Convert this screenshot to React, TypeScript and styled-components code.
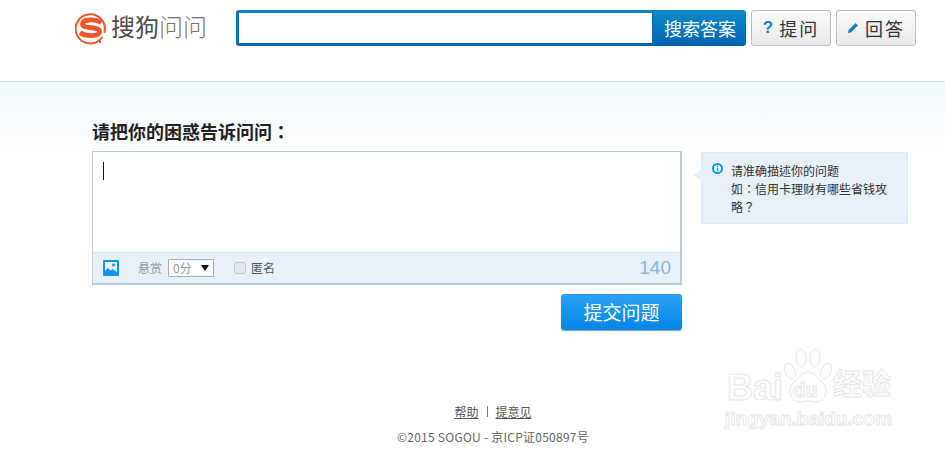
import styled, { createGlobalStyle } from "styled-components";

const GlobalStyle = createGlobalStyle`
  html, body {
    margin: 0;
    padding: 0;
    background: #fff;
    overflow: hidden;
  }
  body {
    font-family: "Liberation Sans", "Noto Sans CJK SC", sans-serif;
    color: #333;
  }
`;

const Page = styled.div`
  position: relative;
  width: 945px;
  height: 451px;
  overflow: hidden;
`;

const Header = styled.header`
  height: 82px;
  box-sizing: border-box;
  border-bottom: 1px solid #cfe0ea;
  padding: 10px 0 0 75px;
  display: flex;
  align-items: flex-start;
`;

const Logo = styled.div`
  display: flex;
  align-items: center;
  gap: 4px;
  width: 161px;
  height: 36px;
`;

const LogoText = styled.span`
  font-size: 24px;
  line-height: 36px;
  color: #4c4c4c;
  white-space: nowrap;
  span {
    color: #777;
    font-weight: 300;
  }
`;

const SearchForm = styled.div`
  display: flex;
  width: 510px;
  height: 36px;
`;

const SearchInput = styled.div`
  width: 417px;
  box-sizing: border-box;
  border: 3px solid #0a72b8;
  border-top-color: #0a84c6;
  border-bottom-color: #0567ae;
  border-right-width: 1px;
  border-radius: 3px 0 0 3px;
  background: #fff;
`;

const SearchButton = styled.button`
  width: 93px;
  padding: 0;
  border: 0;
  border-left: 1px solid #0a6aa8;
  border-radius: 0 3px 3px 0;
  background: linear-gradient(#0a8ccb, #0263ae);
  color: #fff;
  font: 18px/36px "Noto Sans CJK SC", sans-serif;
`;

const ToolButton = styled.button`
  display: flex;
  align-items: center;
  justify-content: center;
  gap: 6px;
  width: 80px;
  height: 36px;
  margin-left: 5px;
  padding: 0;
  box-sizing: border-box;
  border: 1px solid #bdbdbd;
  border-radius: 3px;
  background: linear-gradient(#fafafa, #e9e9e9);
  color: #333;
  font: 18px/34px "Noto Sans CJK SC", sans-serif;
  letter-spacing: 2px;
`;

const QuestionMark = styled.span`
  color: #0a84c6;
  font: bold 17px/34px "Liberation Sans", sans-serif;
  letter-spacing: 0;
`;

const Main = styled.main`
  height: 369px;
  box-sizing: border-box;
  padding: 39px 37px 0 92px;
  background: linear-gradient(#f0f8fd, #fff 75px);
`;

const Title = styled.h1`
  margin: 0 0 9px;
  font: bold 18px/21px "Noto Sans CJK TC", sans-serif;
  color: #222;
`;

const Columns = styled.div`
  display: flex;
  align-items: flex-start;
`;

const Composer = styled.div`
  width: 590px;
`;

const EditorBox = styled.div`
  height: 134px;
  box-sizing: border-box;
  border: 1px solid #bccbd8;
  border-right-width: 2px;
  border-bottom-width: 2px;
  display: flex;
  flex-direction: column;
  background: #fff;
`;

const TextArea = styled.div`
  flex: 1;
  padding: 10px;
`;

const Caret = styled.div`
  width: 1px;
  height: 18px;
  background: #111;
`;

const EditorBar = styled.div`
  height: 31px;
  box-sizing: border-box;
  border-top: 1px solid #d3e2ee;
  background: #e8f0f8;
  display: flex;
  align-items: center;
  padding: 0 9px 0 10px;
  font: 12px/16px "Noto Sans CJK SC", sans-serif;
`;

const BountyLabel = styled.span`
  margin-left: 19px;
  color: #999;
`;

const BountySelect = styled.div`
  width: 46px;
  height: 18px;
  margin-left: 6px;
  box-sizing: border-box;
  border: 1px solid #aaa;
  border-radius: 1px;
  background: #fff;
  color: #999;
  padding-left: 4px;
  display: flex;
  align-items: center;
  justify-content: space-between;
`;

const SelectArrow = styled.i`
  width: 0;
  height: 0;
  margin-right: 4px;
  border-left: 4px solid transparent;
  border-right: 4px solid transparent;
  border-top: 6px solid #111;
`;

const CheckBox = styled.i`
  width: 10px;
  height: 10px;
  margin-left: 20px;
  border: 1px solid #c3ccd4;
  border-radius: 2px;
  background: #e0e6ea;
`;

const CheckLabel = styled.span`
  margin-left: 5px;
  color: #555;
`;

const Counter = styled.span`
  margin-left: auto;
  color: #85b5d8;
  font: 19px/24px "Liberation Sans", sans-serif;
`;

const SubmitRow = styled.div`
  display: flex;
  justify-content: flex-end;
  margin-top: 9px;
`;

const SubmitButton = styled.button`
  width: 121px;
  height: 36px;
  padding: 0;
  border: 0;
  border-radius: 3px;
  background: linear-gradient(#2ba3f5, #0484e6);
  box-shadow: 0 1px 1px #8a9aa5;
  color: #fff;
  font: 19px/36px "Noto Sans CJK SC", sans-serif;
`;

const Tip = styled.aside`
  position: relative;
  width: 207px;
  height: 72px;
  margin: 1px 0 0 19px;
  box-sizing: border-box;
  border: 1px solid #dfe9f2;
  background: #e8f0f8;
  padding: 9px 18px 0 29px;
  color: #333;
  font: 12px/18px "Noto Sans CJK TC", sans-serif;
  &::before {
    content: "";
    position: absolute;
    left: -9px;
    top: 16px;
    border-top: 6px solid transparent;
    border-bottom: 6px solid transparent;
    border-right: 9px solid #e8f0f8;
  }
`;

const TipIcon = styled.svg`
  position: absolute;
  left: 10px;
  top: 10px;
`;

const Footer = styled.footer`
  position: absolute;
  left: 0;
  right: 0;
  top: 402px;
  padding-left: 41px;
  text-align: center;
  font: 12px/18px "Noto Sans CJK SC", sans-serif;
  letter-spacing: 0.25px;
  color: #666;
`;

const FooterLinks = styled.div`
  display: flex;
  justify-content: center;
  align-items: center;
  gap: 8px;
  height: 19px;
  margin-bottom: 7px;
  letter-spacing: 0;
  a {
    color: #555;
    text-decoration: underline;
  }
  i {
    width: 1px;
    height: 11px;
    background: #777;
  }
`;

const Watermark = styled.div`
  position: absolute;
  left: 724px;
  top: 347px;
  width: 180px;
  height: 88px;
  pointer-events: none;
`;

const WatermarkWord = styled.span<{ $size: number; $left: number; $top: number }>`
  position: absolute;
  left: ${(p) => p.$left}px;
  top: ${(p) => p.$top}px;
  font: bold ${(p) => p.$size}px/1 "Liberation Sans", "Noto Sans CJK SC", sans-serif;
  color: #fff;
  -webkit-text-stroke: 1px #e8e8e8;
  white-space: nowrap;
`;

const PawSvg = styled.svg`
  position: absolute;
  left: 59px;
  top: 2px;
`;

function SogouLogo() {
  return (
    <svg width="32" height="34" viewBox="0 0 32 34" fill="none">
      <path d="M27 26.5A14.6 14.6 0 1 1 29.5 21" stroke="#f0562a" strokeWidth="2" strokeLinecap="round" />
      <circle cx="25" cy="31" r="1.2" fill="#f0562a" />
      <path
        d="M26.5 11.5C20 7.8 7.5 8 7.5 13 7.5 18.5 24.5 15 24.5 20.5 24.5 26 11 25.5 5 21.8"
        stroke="#f0562a"
        strokeWidth="4.8"
      />
    </svg>
  );
}

function PencilIcon() {
  return (
    <svg width="12" height="12" viewBox="0 0 12 12">
      <path d="M8.6 1 11 3.4 4 10.4 1 11l.6-3z" fill="#0a84c6" />
    </svg>
  );
}

function PictureIcon() {
  return (
    <svg width="16" height="16" viewBox="0 0 16 16">
      <rect width="16" height="16" rx="1" fill="#0d95ec" />
      <rect x="2" y="2" width="12" height="12" fill="#e8f4fd" />
      <circle cx="10.5" cy="5" r="1.5" fill="#0d95ec" />
      <path d="M2 14v-3l3-3 2.5 2.5L9.5 9 14 12v2z" fill="#0d95ec" />
    </svg>
  );
}

function InfoIcon() {
  return (
    <TipIcon width="11" height="11" viewBox="0 0 11 11">
      <circle cx="5.5" cy="5.5" r="4.5" fill="#fff" stroke="#0d95ec" strokeWidth="2" />
      <rect x="4.8" y="2.4" width="1.4" height="1.4" fill="#0d95ec" />
      <rect x="4.8" y="4.6" width="1.4" height="3.6" fill="#0d95ec" />
    </TipIcon>
  );
}

export default function App() {
  return (
    <Page>
      <GlobalStyle />
      <Header>
        <Logo>
          <SogouLogo />
          <LogoText>
            搜狗<span>问问</span>
          </LogoText>
        </Logo>
        <SearchForm>
          <SearchInput />
          <SearchButton>搜索答案</SearchButton>
        </SearchForm>
        <ToolButton>
          <QuestionMark>?</QuestionMark>提问
        </ToolButton>
        <ToolButton>
          <PencilIcon />回答
        </ToolButton>
      </Header>
      <Main>
        <Title>请把你的困惑告诉问问：</Title>
        <Columns>
          <Composer>
            <EditorBox>
              <TextArea>
                <Caret />
              </TextArea>
              <EditorBar>
                <PictureIcon />
                <BountyLabel>悬赏</BountyLabel>
                <BountySelect>
                  0分
                  <SelectArrow />
                </BountySelect>
                <CheckBox />
                <CheckLabel>匿名</CheckLabel>
                <Counter>140</Counter>
              </EditorBar>
            </EditorBox>
            <SubmitRow>
              <SubmitButton>提交问题</SubmitButton>
            </SubmitRow>
          </Composer>
          <Tip>
            <InfoIcon />
            请准确描述你的问题
            <br />
            如：信用卡理财有哪些省钱攻略？
          </Tip>
        </Columns>
      </Main>
      <Footer>
        <FooterLinks>
          <a>帮助</a>
          <i />
          <a>提意见</a>
        </FooterLinks>
        ©2015 SOGOU - 京ICP证050897号
      </Footer>
      <Watermark>
        <WatermarkWord $size={36} $left={3} $top={23}>Bai</WatermarkWord>
        <PawSvg width="50" height="56" viewBox="0 0 50 56" fill="#fff" stroke="#e8e8e8" strokeWidth="1">
          <ellipse cx="7" cy="22" rx="5" ry="8" transform="rotate(-25 7 22)" />
          <ellipse cx="18" cy="9" rx="5" ry="8.5" />
          <ellipse cx="32" cy="9" rx="5" ry="8.5" />
          <ellipse cx="43" cy="22" rx="5" ry="8" transform="rotate(25 43 22)" />
          <path d="M25 23c6 0 8 6 14 10 7 5 5 20-6 20-4 0-5-1-8-1s-4 1-8 1c-11 0-13-15-6-20 6-4 8-10 14-10z" />
        </PawSvg>
        <WatermarkWord $size={20} $left={69} $top={33}>du</WatermarkWord>
        <WatermarkWord $size={29} $left={109} $top={24}>经验</WatermarkWord>
        <WatermarkWord $size={19} $left={1} $top={62}>jingyan.baidu.com</WatermarkWord>
      </Watermark>
    </Page>
  );
}
